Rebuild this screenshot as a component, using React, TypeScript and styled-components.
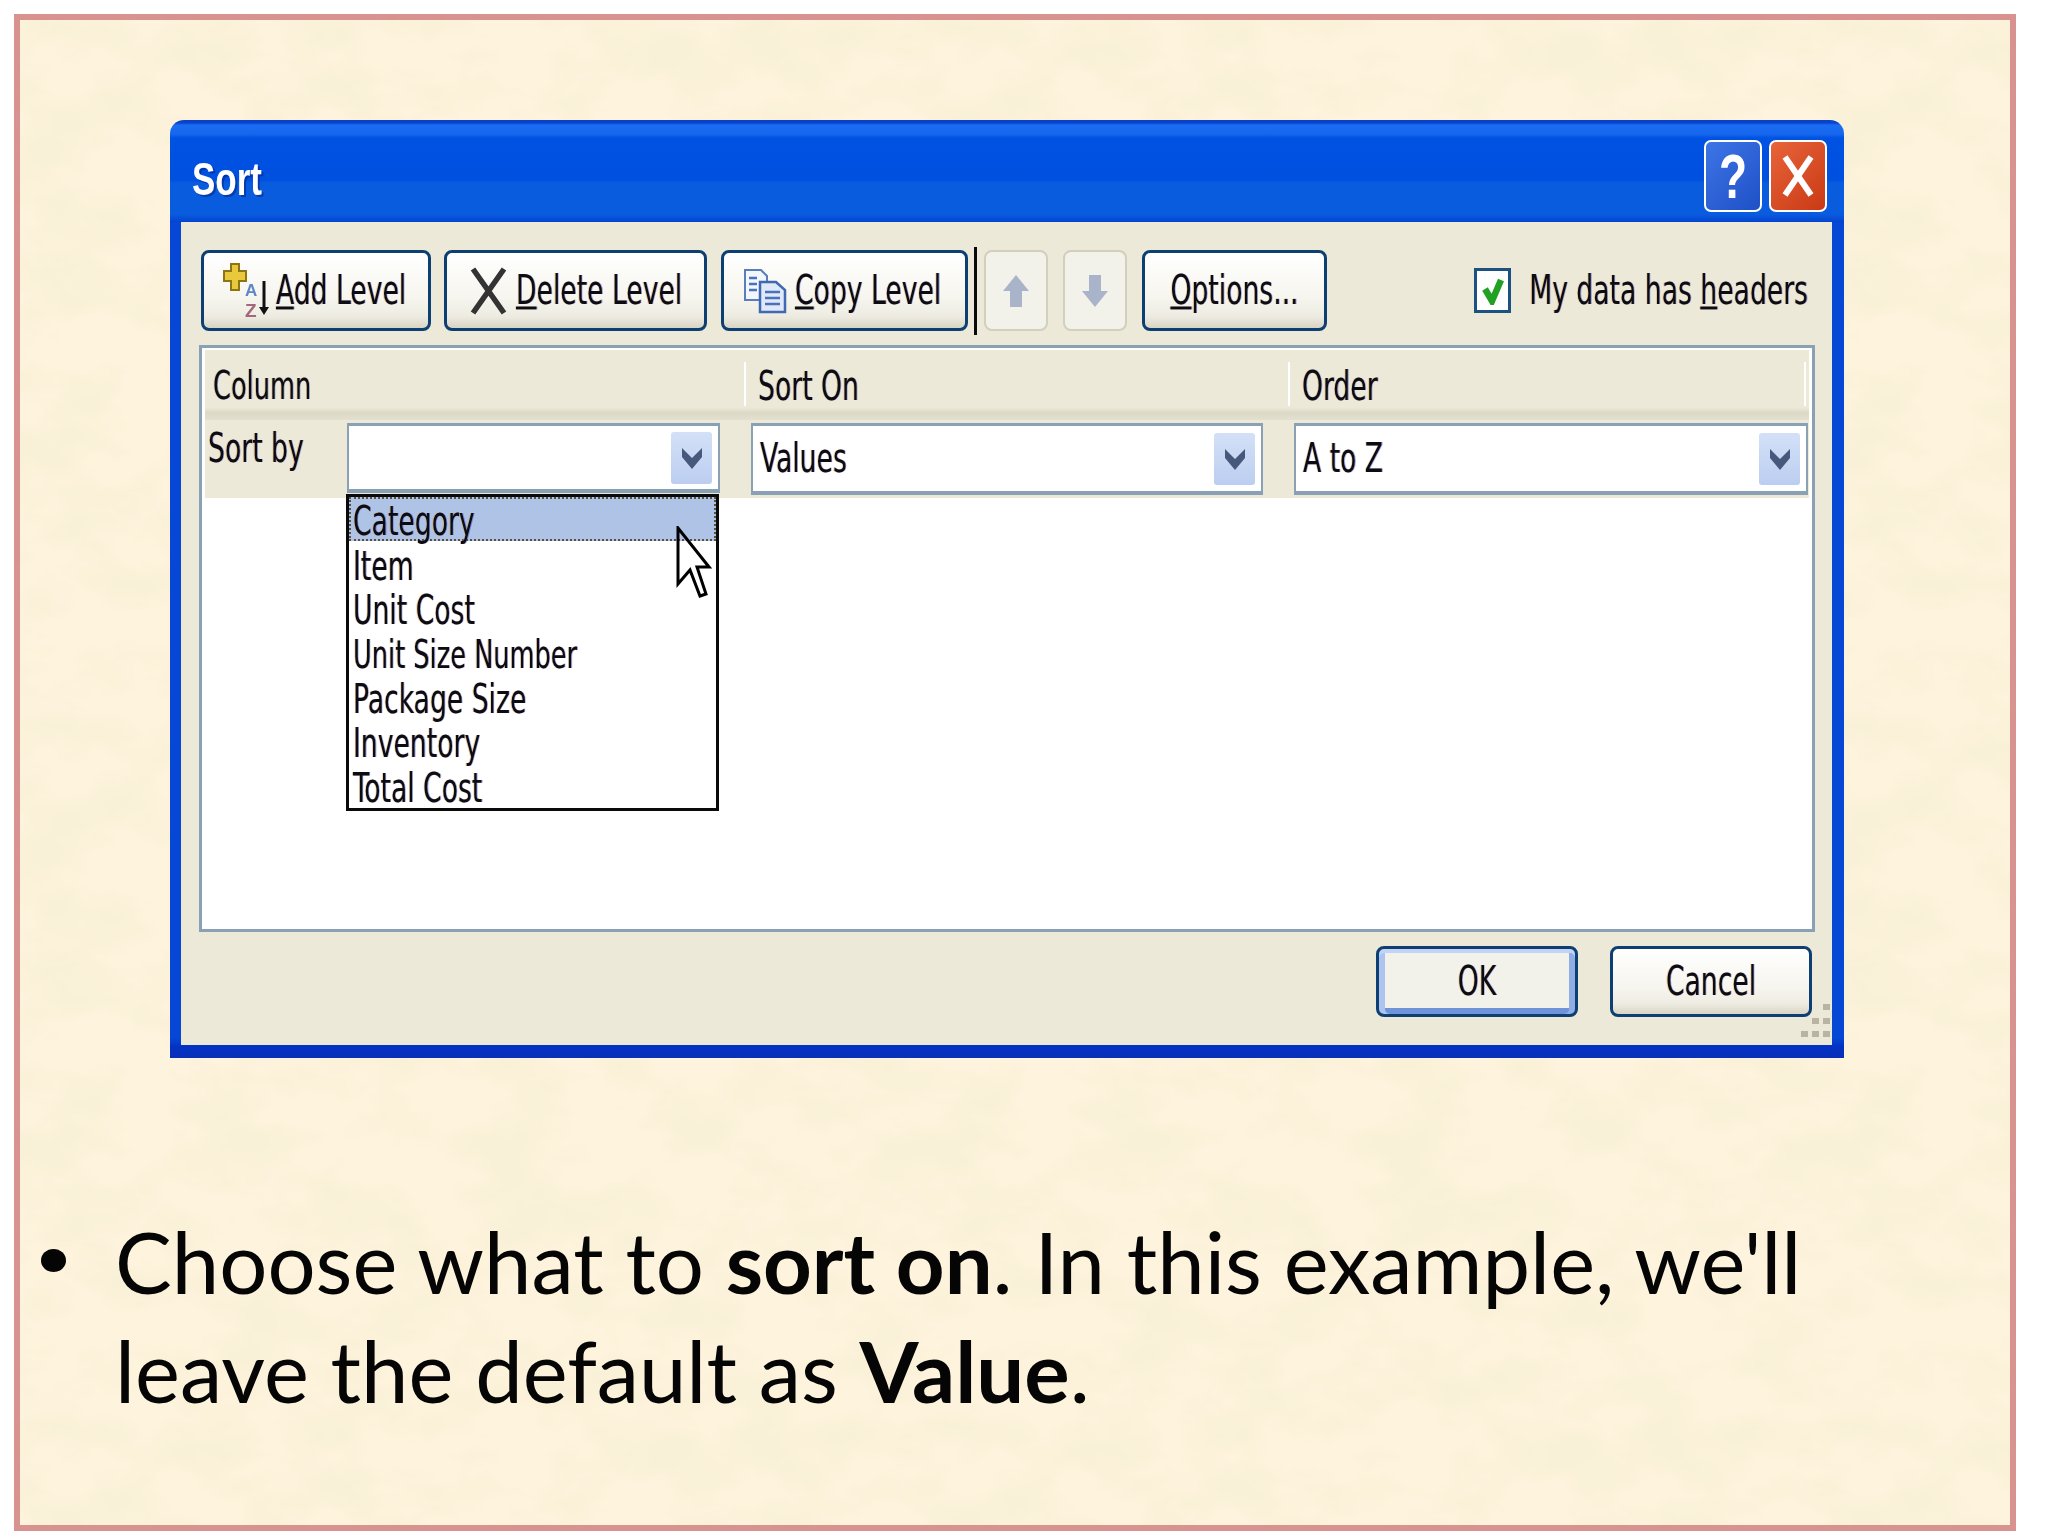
import React from 'react';
import styled, { createGlobalStyle } from 'styled-components';

const paperSvg = `<svg xmlns="http://www.w3.org/2000/svg" width="900" height="700"><filter id="p" x="0" y="0" width="100%" height="100%"><feTurbulence type="fractalNoise" baseFrequency="0.011 0.017" numOctaves="4" seed="7" stitchTiles="stitch"/><feColorMatrix values="0 0 0 0 0.94  0 0 0 0 0.87  0 0 0 0 0.68  3 0 0 0 -1.25"/></filter><rect width="900" height="700" fill="#fef3dc"/><rect width="900" height="700" filter="url(#p)"/></svg>`;

const GlobalStyle = createGlobalStyle`
  html, body {
    margin: 0;
    padding: 0;
    background: #ffffff;
  }
  body {
    font-family: "DejaVu Sans Condensed", "DejaVu Sans", sans-serif;
  }
`;

const Slide = styled.div`
  box-sizing: border-box;
  width: 2002px;
  height: 1517px;
  margin: 14px 0 0 14px;
  border: 6px solid #d8928f;
  background: #fdf2da url("data:image/svg+xml,${encodeURIComponent(paperSvg)}");
  overflow: hidden;
`;

const Dialog = styled.div`
  box-sizing: border-box;
  width: 1674px;
  height: 938px;
  margin: 100px 0 0 150px;
  padding: 0 12px 13px 11px;
  display: flex;
  flex-direction: column;
  border-radius: 14px 14px 0 0;
  background: linear-gradient(
    180deg,
    #0a3fc4 0,
    #0a44cf 3px,
    #1a6df2 5px,
    #1767ee 14px,
    #0052e2 18px,
    #0050e0 60px,
    #0a5cdf 63px,
    #0a5cdf 94px,
    #0344d0 102px,
    #0647d6 103px,
    #0647d6 918px,
    #0333c4 926px,
    #0a2fb8 938px
  );
  filter: blur(0.6px);
`;

const TitleBar = styled.div`
  height: 102px;
  flex: none;
  display: flex;
  align-items: center;
  padding: 0 5px 0 11px;
`;

const TitleText = styled.span`
  display: inline-block;
  margin-top: 16px;
  font-family: "Liberation Sans", sans-serif;
  font-size: 35px;
  font-weight: 700;
  color: #ffffff;
  transform: scaleY(1.32);
  text-shadow: 2px 2px 0 rgba(0, 30, 120, 0.5);
`;

const CaptionButton = styled.div<{ $kind: 'help' | 'close' }>`
  box-sizing: border-box;
  width: 58px;
  height: 72px;
  margin-top: 10px;
  margin-left: ${({ $kind }) => ($kind === 'help' ? 'auto' : '7px')};
  display: flex;
  align-items: center;
  justify-content: center;
  border: 2px solid #ffffff;
  border-radius: 7px;
  background: ${({ $kind }) =>
    $kind === 'help'
      ? 'linear-gradient(135deg, #3d75e6, #1f50c6)'
      : 'linear-gradient(135deg, #e8643a, #c93a14)'};
`;

const HelpMark = styled.span`
  display: inline-block;
  font-family: "Liberation Sans", sans-serif;
  font-size: 46px;
  font-weight: 700;
  color: #ffffff;
  transform: scaleY(1.35);
`;

const Client = styled.div`
  flex: 1;
  display: flex;
  flex-direction: column;
  position: relative;
  background: #ece9d8;
`;

const Toolbar = styled.div`
  height: 81px;
  margin-top: 28px;
  padding: 0 24px 0 20px;
  flex: none;
  display: flex;
  align-items: center;
`;

const Txt = styled.span<{ $size?: number }>`
  display: inline-block;
  font-size: ${({ $size }) => $size ?? 29.6}px;
  line-height: 1.1;
  white-space: nowrap;
  color: #0c0c14;
  transform: scaleY(1.39);
  text-shadow: -0.8px 0 0 rgba(235, 150, 40, 0.45), 0.8px 0 0 rgba(40, 70, 210, 0.45);
`;

const Mn = styled.span`
  text-decoration: underline;
  text-decoration-thickness: 2px;
  text-underline-offset: 2px;
`;

const XpButton = styled.div<{ $w: number; $h?: number; $gap?: number; $def?: boolean }>`
  box-sizing: border-box;
  width: ${({ $w }) => $w}px;
  height: ${({ $h }) => $h ?? 81}px;
  margin-left: ${({ $gap }) => $gap ?? 0}px;
  flex: none;
  display: flex;
  align-items: center;
  justify-content: center;
  gap: 8px;
  border: 3px solid #0d3f72;
  border-radius: 8px;
  background: linear-gradient(180deg, #ffffff 0, #f6f5ee 60%, #eeece2 84%, #d9d5c5 100%);
  ${({ $def }) =>
    $def &&
    `box-shadow: inset 0 4px 0 #c2d3f6, inset 6px 0 0 #adc4f0, inset -6px 0 0 #90aee6, inset 0 -6px 0 #6f93d8;
     background: #f3f2ea;`}
`;

const ToolButton = styled(XpButton)<{ $pad: number }>`
  justify-content: flex-start;
  padding-left: ${({ $pad }) => $pad}px;
`;

const MoveButton = styled.div<{ $gap: number }>`
  box-sizing: border-box;
  width: 64px;
  height: 81px;
  margin-left: ${({ $gap }) => $gap}px;
  flex: none;
  display: flex;
  align-items: center;
  justify-content: center;
  border: 2px solid #d2cfbd;
  border-radius: 8px;
  background: #f3f2ea;
`;

const Separator = styled.div`
  width: 3px;
  height: 88px;
  margin-left: 6px;
  flex: none;
  background: #0a0a0a;
`;

const HeadersCheck = styled.div`
  margin-left: auto;
  display: flex;
  align-items: center;
  gap: 18px;
`;

const CheckBox = styled.div`
  box-sizing: border-box;
  width: 37px;
  height: 45px;
  display: flex;
  align-items: center;
  justify-content: center;
  border: 3px solid #1c5180;
  background: #ffffff;
`;

const Panel = styled.div`
  box-sizing: border-box;
  width: 1616px;
  height: 587px;
  margin: 14px 0 0 18px;
  padding: 2px 3px 0;
  flex: none;
  border: 3px solid #8aa0b5;
  background: #ffffff;
`;

const HeaderRow = styled.div`
  height: 70px;
  display: grid;
  grid-template-columns: 539px 544px 518px;
  align-items: start;
  background: linear-gradient(180deg, #ece9d8 0, #ece9d8 82%, #dcd8c6 90%, #e4e0cf 100%);
`;

const HeaderCell = styled.div<{ $pos: 'first' | 'mid' | 'last' }>`
  box-sizing: border-box;
  height: 44px;
  margin-top: 12px;
  padding: 4px 0 0 ${({ $pos }) => ($pos === 'first' ? '8px' : '12px')};
  display: flex;
  align-items: center;
  border-left: ${({ $pos }) => ($pos === 'first' ? 'none' : '2px solid #ffffff')};
  border-right: ${({ $pos }) => ($pos === 'last' ? '2px solid #ffffff' : 'none')};
`;

const SortRow = styled.div`
  height: 78px;
  padding-top: 3px;
  box-sizing: border-box;
  display: flex;
  align-items: flex-start;
  background: #ece9d8;
`;

const SortLabel = styled.div`
  width: 139px;
  padding: 9px 0 0 3px;
  flex: none;
`;

const Combo = styled.div<{ $w: number; $h: number; $gap?: number }>`
  box-sizing: border-box;
  position: relative;
  width: ${({ $w }) => $w}px;
  height: ${({ $h }) => $h}px;
  margin-left: ${({ $gap }) => $gap ?? 0}px;
  padding: 0 6px 0 7px;
  flex: none;
  display: flex;
  align-items: center;
  justify-content: space-between;
  border-style: solid;
  border-color: #8aa0b5;
  border-width: 3px 2px 4px;
  background: #ffffff;
`;

const ComboButton = styled.div`
  width: 41px;
  height: 52px;
  margin-left: auto;
  flex: none;
  display: flex;
  align-items: center;
  justify-content: center;
  border-radius: 3px;
  background: linear-gradient(180deg, #d3e0f7, #bccef0);
`;

const DropList = styled.div`
  box-sizing: border-box;
  position: absolute;
  left: -3px;
  top: calc(100% + 5px);
  width: 373px;
  height: 317px;
  border: 3px solid #0a0a0a;
  background: #ffffff;
  z-index: 2;
`;

const DropItem = styled.div<{ $active?: boolean }>`
  box-sizing: border-box;
  height: 44.4px;
  padding: 5px 0 0 4px;
  display: flex;
  align-items: center;
  ${({ $active }) =>
    $active &&
    `background: #aec3e6;
     outline: 2px dotted #5a5040;
     outline-offset: -2px;`}
`;

const Pointer = styled.svg`
  position: absolute;
  left: 327px;
  top: 29px;
`;

const Footer = styled.div`
  padding: 14px 20px 0 0;
  display: flex;
  justify-content: flex-end;
  gap: 32px;
`;

const Grip = styled.svg`
  position: absolute;
  right: 1px;
  bottom: 7px;
`;

const BulletRow = styled.div`
  margin-top: 149px;
  padding-left: 21px;
  display: flex;
  align-items: flex-start;
`;

const BulletDot = styled.div`
  width: 25px;
  height: 23px;
  margin-top: 42px;
  flex: none;
  border-radius: 50%;
  background: #050505;
`;

const BulletText = styled.div`
  margin-left: 49px;
  color: #050505;
  font-family: Lato, "Open Sans", sans-serif;
  font-size: 85px;
`;

const BulletLine = styled.div`
  height: 109px;
  line-height: 109px;
  white-space: nowrap;
`;

const ChevronDown = () => (
  <svg width="24" height="26" viewBox="0 0 24 26">
    <path d="M2 3 L12 13 L22 3 V12 L12 24 L2 12 Z" fill="#46597d" />
  </svg>
);

const sortFields = ['Category', 'Item', 'Unit Cost', 'Unit Size Number', 'Package Size', 'Inventory', 'Total Cost'];

export default function App() {
  return (
    <>
      <GlobalStyle />
      <Slide>
        <Dialog>
          <TitleBar>
            <TitleText>Sort</TitleText>
            <CaptionButton $kind="help">
              <HelpMark>?</HelpMark>
            </CaptionButton>
            <CaptionButton $kind="close">
              <svg width="34" height="44" viewBox="0 0 34 44">
                <path d="M4 3 L30 41 M30 3 L4 41" stroke="#ffffff" strokeWidth="6" fill="none" />
              </svg>
            </CaptionButton>
          </TitleBar>
          <Client>
            <Toolbar>
              <ToolButton $w={230} $pad={19}>
                <svg width="45" height="56" viewBox="0 0 45 56" overflow="visible">
                  <path d="M8 1 H16 V8 H23 V18 H16 V27 H8 V18 H1 V8 H8 Z" fill="#e8c93c" stroke="#8d7414" strokeWidth="2" />
                  <text x="22" y="33" fontSize="17" fontWeight="700" fontFamily="Liberation Sans" fill="#5f86c8">A</text>
                  <text x="22" y="54" fontSize="19" fontWeight="700" fontFamily="Liberation Sans" fill="#a2697c">Z</text>
                  <path d="M41 18 V48" stroke="#111" strokeWidth="3" />
                  <path d="M36 44 H46 L41 52 Z" fill="#111" />
                </svg>
                <Txt><Mn>A</Mn>dd Level</Txt>
              </ToolButton>
              <ToolButton $w={263} $gap={13} $pad={23}>
                <svg width="38" height="48" viewBox="0 0 38 48">
                  <path d="M3 2 L34 46 M34 2 L3 46" stroke="#333333" strokeWidth="5.5" fill="none" />
                </svg>
                <Txt><Mn>D</Mn>elete Level</Txt>
              </ToolButton>
              <ToolButton $w={247} $gap={14} $pad={19}>
                <svg width="44" height="46" viewBox="0 0 44 46">
                  <path d="M2 2 H18 L24 8 V32 H2 Z" fill="#f2f6fd" stroke="#5a7fb8" strokeWidth="2" />
                  <path d="M17 14 H33 L42 22 V44 H17 Z" fill="#dfe9f9" stroke="#3f69b0" strokeWidth="2.5" />
                  <path d="M6 10 H14 M6 16 H14 M6 22 H14 M22 24 H37 M22 30 H37 M22 36 H37" stroke="#4a72b8" strokeWidth="2.5" />
                </svg>
                <Txt><Mn>C</Mn>opy Level</Txt>
              </ToolButton>
              <Separator />
              <MoveButton $gap={7}>
                <svg width="28" height="34" viewBox="0 0 28 34">
                  <path d="M14 1 L27 17 H20 V33 H8 V17 H1 Z" fill="#a9b3ca" />
                </svg>
              </MoveButton>
              <MoveButton $gap={15}>
                <svg width="28" height="34" viewBox="0 0 28 34">
                  <path d="M14 33 L27 17 H20 V1 H8 V17 H1 Z" fill="#a9b3ca" />
                </svg>
              </MoveButton>
              <XpButton $w={185} $gap={15}>
                <Txt><Mn>O</Mn>ptions...</Txt>
              </XpButton>
              <HeadersCheck>
                <CheckBox>
                  <svg width="24" height="28" viewBox="0 0 24 28">
                    <path d="M4 12 L11 24 L20 3" stroke="#21a021" strokeWidth="6.5" fill="none" />
                  </svg>
                </CheckBox>
                <Txt>My data has <Mn>h</Mn>eaders</Txt>
              </HeadersCheck>
            </Toolbar>
            <Panel>
              <HeaderRow>
                <HeaderCell $pos="first"><Txt $size={28.5}>Column</Txt></HeaderCell>
                <HeaderCell $pos="mid"><Txt>Sort On</Txt></HeaderCell>
                <HeaderCell $pos="last"><Txt>Order</Txt></HeaderCell>
              </HeaderRow>
              <SortRow>
                <SortLabel><Txt>Sort by</Txt></SortLabel>
                <Combo $w={373} $h={70}>
                  <ComboButton><ChevronDown /></ComboButton>
                  <DropList>
                    {sortFields.map((field, i) => (
                      <DropItem key={field} $active={i === 0}>
                        <Txt $size={field === 'Unit Size Number' ? 28.5 : undefined}>{field}</Txt>
                      </DropItem>
                    ))}
                    <Pointer width="36" height="74" viewBox="0 0 36 74">
                      <path d="M2 2 V58 L14 44 L24 70 L30 68 L21 41 H33 Z" fill="none" stroke="#000000" strokeWidth="3" />
                    </Pointer>
                  </DropList>
                </Combo>
                <Combo $w={512} $h={72} $gap={31}>
                  <Txt>Values</Txt>
                  <ComboButton><ChevronDown /></ComboButton>
                </Combo>
                <Combo $w={514} $h={72} $gap={31}>
                  <Txt>A to Z</Txt>
                  <ComboButton><ChevronDown /></ComboButton>
                </Combo>
              </SortRow>
            </Panel>
            <Footer>
              <XpButton $w={202} $h={71} $def><Txt>OK</Txt></XpButton>
              <XpButton $w={202} $h={71}><Txt>Cancel</Txt></XpButton>
            </Footer>
            <Grip width="34" height="34" viewBox="0 0 34 34">
              <path d="M26 0h7v6h-7z M15 14h7v6h-7z M26 14h7v6h-7z M4 27h7v6H4z M15 27h7v6h-7z M26 27h7v6h-7z" fill="#b8b3a2" />
            </Grip>
          </Client>
        </Dialog>
        <BulletRow>
          <BulletDot />
          <BulletText>
            <BulletLine>Choose what to <b>sort on</b>. In this example, we'll</BulletLine>
            <BulletLine>leave the default as <b>Value</b>.</BulletLine>
          </BulletText>
        </BulletRow>
      </Slide>
    </>
  );
}
